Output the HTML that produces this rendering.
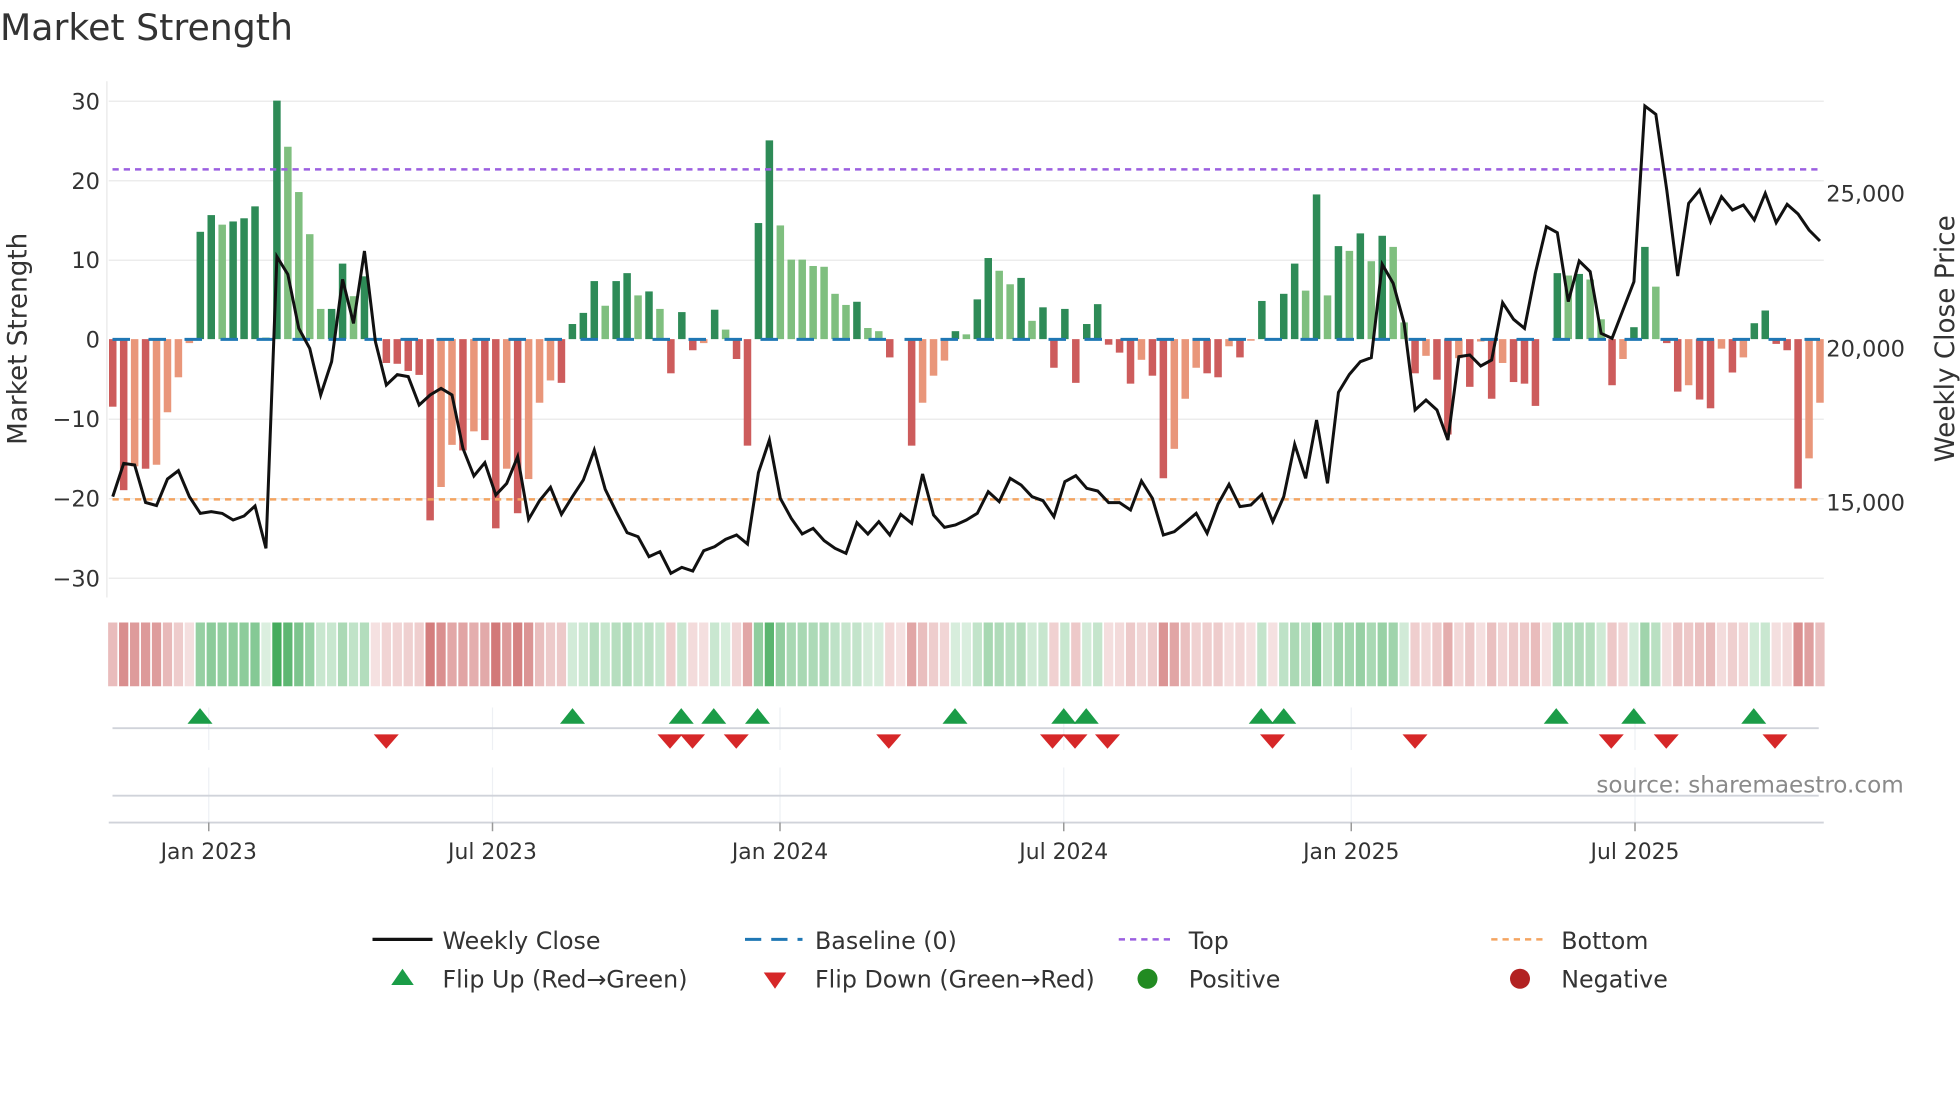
<!DOCTYPE html>
<html><head><meta charset="utf-8">
<style>
html,body{margin:0;padding:0;background:#fff;}
svg{display:block;}
text{font-family:"DejaVu Sans","Liberation Sans",sans-serif;fill:#333;}
</style></head>
<body>
<svg id="c" xmlns="http://www.w3.org/2000/svg" width="1960" height="1102" viewBox="0 0 1568 881.6">
<rect width="1568" height="881.6" fill="#fff"/>
<text x="0" y="32" font-size="29">Market Strength</text>
<g stroke="#ececec" stroke-width="1.2">
<line x1="87" x2="1459" y1="81" y2="81"/>
<line x1="87" x2="1459" y1="144.6" y2="144.6"/>
<line x1="87" x2="1459" y1="208.2" y2="208.2"/>
<line x1="87" x2="1459" y1="335.4" y2="335.4"/>
<line x1="87" x2="1459" y1="399" y2="399"/>
<line x1="87" x2="1459" y1="462.6" y2="462.6"/>
<line x1="85.5" x2="85.5" y1="65" y2="478"/>
</g>
<g font-size="18" text-anchor="end">
<text x="80" y="87.5">30</text>
<text x="80" y="151">20</text>
<text x="80" y="214.5">10</text>
<text x="80" y="278">0</text>
<text x="80" y="341.5">−10</text>
<text x="80" y="405">−20</text>
<text x="80" y="469">−30</text>
</g>
<g font-size="18">
<text x="1461" y="161">25,000</text>
<text x="1461" y="285">20,000</text>
<text x="1461" y="408.5">15,000</text>
</g>
<text font-size="21" text-anchor="middle" transform="translate(21,271) rotate(-90)">Market Strength</text>
<text font-size="21" text-anchor="middle" transform="translate(1563,271) rotate(-90)">Weekly Close Price</text>
<g id="bars"></g>
<line x1="90" x2="1456" y1="271.5" y2="271.5" stroke="#1f77b4" stroke-width="2.4" stroke-dasharray="14 14.8"/>
<line x1="90" x2="1456" y1="135.5" y2="135.5" stroke="#9b5fe0" stroke-width="2" stroke-dasharray="5 4"/>
<line x1="90" x2="1456" y1="399.5" y2="399.5" stroke="#f4a460" stroke-width="2" stroke-dasharray="5 4"/>
<polyline id="price" fill="none" stroke="#111" stroke-width="2.4" stroke-linejoin="miter"/>
<g id="heat"></g>
<g stroke="#eef0f4" stroke-width="1">
<line x1="167" x2="167" y1="566" y2="600"/><line x1="394" x2="394" y1="566" y2="600"/>
<line x1="624" x2="624" y1="566" y2="600"/><line x1="851" x2="851" y1="566" y2="600"/>
<line x1="1081" x2="1081" y1="566" y2="600"/><line x1="1308" x2="1308" y1="566" y2="600"/>
<line x1="167" x2="167" y1="614" y2="658"/><line x1="394" x2="394" y1="614" y2="658"/>
<line x1="624" x2="624" y1="614" y2="658"/><line x1="851" x2="851" y1="614" y2="658"/>
<line x1="1081" x2="1081" y1="614" y2="658"/><line x1="1308" x2="1308" y1="614" y2="658"/>
</g>
<line x1="90" x2="1455" y1="582.5" y2="582.5" stroke="#d0d3da" stroke-width="1.5"/>
<line x1="90" x2="1455" y1="636.5" y2="636.5" stroke="#d0d3da" stroke-width="1.5"/>
<line x1="87" x2="1459" y1="658" y2="658" stroke="#d0d3da" stroke-width="1.5"/>
<g stroke="#999" stroke-width="1.2">
<line x1="167" x2="167" y1="658" y2="665"/><line x1="394" x2="394" y1="658" y2="665"/>
<line x1="624" x2="624" y1="658" y2="665"/><line x1="851" x2="851" y1="658" y2="665"/>
<line x1="1081" x2="1081" y1="658" y2="665"/><line x1="1308" x2="1308" y1="658" y2="665"/>
</g>
<g id="marks"></g>
<text x="1523" y="634" font-size="18.5" text-anchor="end" style="fill:#8a8a8a">source: sharemaestro.com</text>
<g font-size="17.5" text-anchor="middle">
<text x="167" y="687">Jan 2023</text><text x="394" y="687">Jul 2023</text>
<text x="624" y="687">Jan 2024</text><text x="851" y="687">Jul 2024</text>
<text x="1081" y="687">Jan 2025</text><text x="1308" y="687">Jul 2025</text>
</g>
<line x1="298" x2="346" y1="751.5" y2="751.5" stroke="#111" stroke-width="2.6"/>
<line x1="596" x2="642" y1="751.5" y2="751.5" stroke="#1f77b4" stroke-width="2.4" stroke-dasharray="13 8"/>
<line x1="895" x2="940" y1="751.5" y2="751.5" stroke="#9b5fe0" stroke-width="2" stroke-dasharray="5 4"/>
<line x1="1193" x2="1238" y1="751.5" y2="751.5" stroke="#f4a460" stroke-width="2" stroke-dasharray="5 4"/>
<polygon points="313,788 331,788 322,775" fill="#1a9c47"/>
<polygon points="611,778 629,778 620,791" fill="#d62728"/>
<circle cx="918" cy="783" r="8" fill="#228b22"/>
<circle cx="1216" cy="783" r="8" fill="#b22222"/>
<g font-size="19">
<text x="354" y="759">Weekly Close</text>
<text x="652" y="759">Baseline (0)</text>
<text x="951" y="759">Top</text>
<text x="1249" y="759">Bottom</text>
<text x="354" y="790">Flip Up (Red→Green)</text>
<text x="652" y="790">Flip Down (Green→Red)</text>
<text x="951" y="790">Positive</text>
<text x="1249" y="790">Negative</text>
</g>
</svg>
<script>
var B="-8.5D -19D -16L -16.3D -15.8L -9.2L -4.8L -0.5L 13.5G 15.6G 14.4g 14.8G 15.2G 16.7G 0.2g 30G 24.2g 18.5g 13.2g 3.8g 3.8G 9.5G 5.4g 7.9G 0g -3D -3.1D -4D -4.5D -22.8D -18.6L -13.3L -14D -11.6L -12.7D -23.8D -16.3L -21.9D -17.6L -8L -5.2L -5.5D 1.9G 3.3G 7.3G 4.2g 7.3G 8.3G 5.5g 6G 3.8g -4.3D 3.4G -1.4D -0.5L 3.7G 1.2g -2.5D -13.4D 14.6G 25G 14.3g 10g 10g 9.2g 9.1g 5.7g 4.3g 4.7G 1.4g 1g -2.3D 0g -13.4D -8L -4.6L -2.7L 1G 0.6g 5G 10.2G 8.6g 6.9g 7.7G 2.3g 4G -3.6D 3.8G -5.5D 1.9G 4.4G -0.7D -1.7D -5.6D -2.6L -4.6D -17.5D -13.8L -7.5L -3.6L -4.3D -4.8D -0.9L -2.3D -0.2L 4.8G 0g 5.7G 9.5G 6.1g 18.2G 5.5g 11.7G 11.1g 13.3G 9.8g 13G 11.6g 2.1g -4.3D -2.1L -5.1D -12D -2.4L -6D -0.3L -7.5D -3L -5.4D -5.6D -8.4D 0g 8.3G 8g 8.2G 7.5g 2.5g -5.8D -2.5L 1.5G 11.6G 6.6g -0.5D -6.6D -5.8L -7.6D -8.7D -1.2L -4.2D -2.3L 2G 3.6G -0.6D -1.4D -18.8D -15L -8L".split(" ");
var P=[397.3,370.7,372,402,404.5,383.2,376.5,397.3,410.7,409.3,410.7,416,412.8,404.8,438.7,205.3,219.5,262.7,278.7,316,289.3,223.5,258.7,200.8,273.3,308,299.7,301.3,324,316,310.7,316,358.7,380.8,370.1,396,386.7,365.3,415.5];
var Z=[1262,1222,1303,1250,1200,1110,1228,1295,1358,1370,1430,1415,1480,1462,1473,1412,1400,1378,1365,1392,1178,1080,1255,1315,1362,1345,1382,1405,1420,1328,1362,1325,1365,1303,1330,1182,1305,1342,1335,1320,
1300,1235,1265,1195,1215,1250,1262,1310,1205,1187,1225,1233,1268,1268,1290,1203,1255,1365,1355,1328,1300,1360,1272,1213,1280,1275,1243,1325,1250,1093,1195,1020,1210,937,883,845,833,553,610,
730,990,960,990,1080,830,825,858,840,668,718,745,578,440,458,665,543,575,760,775,690,605,78,103,330,588,370,330,425,350,390,375,420,340,428,373,402,450,483];
Z.forEach(function(z){P.push(64+z/3.75);});
var x0=90.2,st=8.755,y0=271.3,u=6.36;
var col={D:"#cd5c5c",L:"#e9967a",G:"#2e8b57",g:"#7fbf7f"};
var bh="",hh="",pts=[];
B.forEach(function(s,i){
 var v=parseFloat(s),c=s.slice(-1),x=x0+i*st;
 var h=Math.abs(v)*u;
 if(h>0.3) bh+='<rect x="'+(x-3).toFixed(2)+'" y="'+(v>0?y0-h:y0).toFixed(2)+'" width="6" height="'+h.toFixed(2)+'" fill="'+col[c]+'"/>';
 var a=Math.min(0.18+0.8*Math.abs(v)/30,0.95);
 var base=v>0?[60,168,85]:[200,90,90];
 var r=Math.round(255-(255-base[0])*a),g=Math.round(255-(255-base[1])*a),b=Math.round(255-(255-base[2])*a);
 hh+='<rect x="'+(x-3.7).toFixed(2)+'" y="498" width="7.4" height="51" fill="rgb('+r+','+g+','+b+')"/>';
 pts.push(x.toFixed(2)+","+(P[i]||P[P.length-1]).toFixed(2));
});
document.getElementById("bars").innerHTML=bh;
document.getElementById("heat").innerHTML=hh;
document.getElementById("price").setAttribute("points",pts.join(" "));
var up=[160,458,545,571,606,764,851,869,1009,1027,1245,1307,1403],dn=[309,536,554,589,711,842,860,886,1018,1132,1289,1333,1420],m="";
up.forEach(function(x){m+='<polygon points="'+(x-10)+',579 '+(x+10)+',579 '+x+',566.5" fill="#1a9c47"/>';});
dn.forEach(function(x){m+='<polygon points="'+(x-10)+',587.5 '+(x+10)+',587.5 '+x+',599" fill="#d62728"/>';});
document.getElementById("marks").innerHTML=m;
</script>
</body></html>
